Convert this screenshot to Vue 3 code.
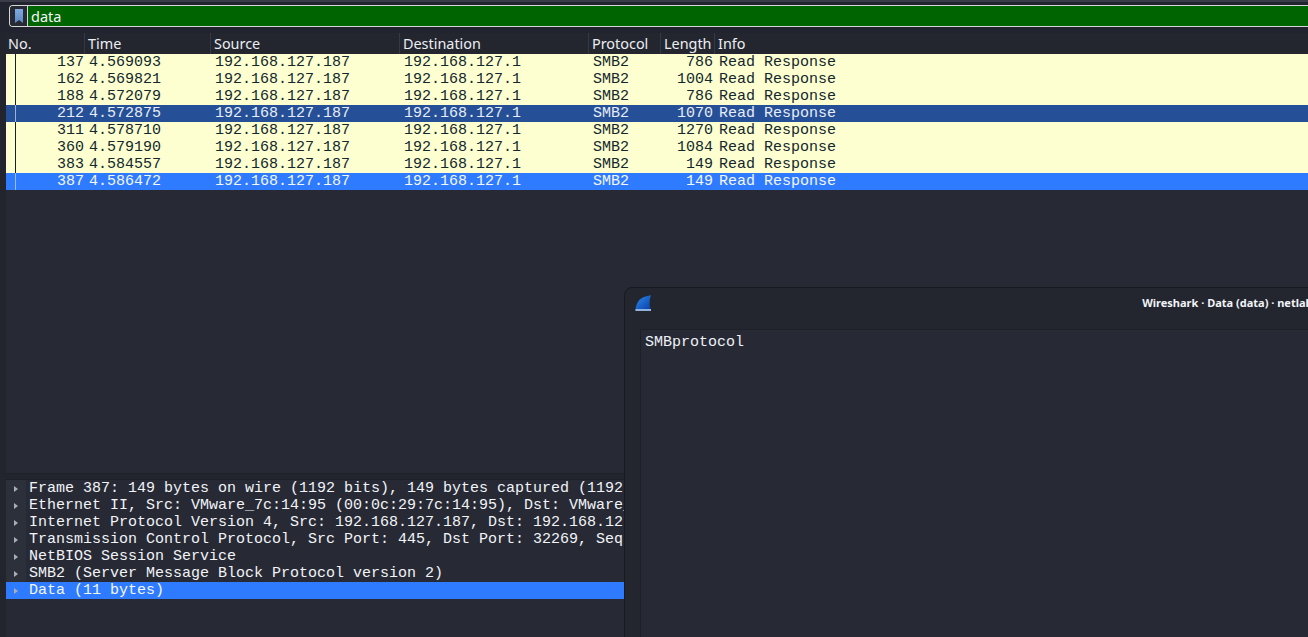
<script setup>
const columns = ['No.', 'Time', 'Source', 'Destination', 'Protocol', 'Length', 'Info']
const rows = [
  ['137', '4.569093', '786', ''],
  ['162', '4.569821', '1004', ''],
  ['188', '4.572079', '786', ''],
  ['212', '4.572875', '1070', 'dim'],
  ['311', '4.578710', '1270', ''],
  ['360', '4.579190', '1084', ''],
  ['383', '4.584557', '149', ''],
  ['387', '4.586472', '149', 'sel'],
]
const tree = [
  'Frame 387: 149 bytes on wire (1192 bits), 149 bytes captured (1192 bits) on interface eth0, id 0',
  'Ethernet II, Src: VMware_7c:14:95 (00:0c:29:7c:14:95), Dst: VMware_c0:00:08 (00:50:56:c0:00:08)',
  'Internet Protocol Version 4, Src: 192.168.127.187, Dst: 192.168.127.1',
  'Transmission Control Protocol, Src Port: 445, Dst Port: 32269, Seq: 8193, Ack: 1, Len: 95',
  'NetBIOS Session Service',
  'SMB2 (Server Message Block Protocol version 2)',
  'Data (11 bytes)',
]
</script>

<template>
  <div class="app">
    <div class="filter-wrap">
      <div class="filter">
        <div class="bookmark">
          <svg width="8" height="14" viewBox="0 0 8 14">
            <defs>
              <linearGradient id="markGrad" x1="0" y1="0" x2="0" y2="1">
                <stop offset="0" stop-color="#7fa9e0" />
                <stop offset="1" stop-color="#5c88c4" />
              </linearGradient>
            </defs>
            <path d="M0 0H8V14L4 11L0 14Z" fill="url(#markGrad)" />
          </svg>
        </div>
        <span class="filter-text">data</span>
      </div>
    </div>

    <div class="packets">
      <div class="row head">
        <div v-for="c in columns" :key="c" class="hcell">{{ c }}</div>
      </div>
      <div v-for="(r, i) in rows" :key="r[0]" class="row pkt" :class="r[3]">
        <span class="mark" :class="{ last: i === rows.length - 1 }"></span>
        <span class="num">{{ r[0] }}</span>
        <span class="cell">{{ r[1] }}</span>
        <span class="cell">192.168.127.187</span>
        <span class="cell">192.168.127.1</span>
        <span class="cell">SMB2</span>
        <span class="len">{{ r[2] }}</span>
        <span class="cell">Read Response</span>
      </div>
    </div>

    <div class="details">
      <div v-for="(t, i) in tree" :key="t" class="node" :class="{ active: i === tree.length - 1 }">
        <span class="gutter"><i class="arrow"></i></span>
        <span class="node-text">{{ t }}</span>
      </div>
    </div>

    <div class="dialog">
      <div class="titlebar">
        <svg class="fin" width="17" height="17" viewBox="0 0 17 17">
          <defs>
            <linearGradient id="finGrad" x1="0" y1="0" x2="1" y2="1">
              <stop offset="0" stop-color="#2a8cf0" />
              <stop offset="1" stop-color="#0b3fa6" />
            </linearGradient>
          </defs>
          <path d="M.5 14C1.5 8 4.5 3.5 9 2C11.5 1.2 14 .5 16 .3C14.3 4.5 14.2 9.5 15.5 14Z" fill="url(#finGrad)" />
          <path d="M.4 14H16V16H.4Z" fill="#8fb2de" />
        </svg>
        <span class="title">Wireshark · Data (data) · netlab.pcapng</span>
      </div>
      <div class="textbox">SMBprotocol</div>
    </div>
  </div>
</template>

<style>
html, body { margin: 0; background: #22252e; overflow: hidden; }
</style>

<style scoped>
.app {
  position: relative;
  width: 1308px;
  height: 637px;
  overflow: hidden;
  background: #22252e;
  display: flex;
  flex-direction: column;
  font-family: "Liberation Mono", monospace;
  color: #f2f4f8;
}
.filter-wrap {
  height: 33px;
  box-sizing: border-box;
  padding: 3px 0 0 9px;
  border-top: 2px solid #3a3d48;
  background: #21242e;
}
.filter {
  height: 22px;
  box-sizing: border-box;
  display: flex;
  align-items: center;
  background: #006400;
  border: 1px solid #d4d6da;
  border-right: 0;
  border-radius: 4px 0 0 4px;
}
.bookmark {
  width: 17px;
  height: 20px;
  flex: none;
  display: flex;
  align-items: center;
  justify-content: center;
  background: #272a35;
  border-right: 1px solid #d4d6da;
  border-radius: 3px 0 0 3px;
}
.filter-text {
  margin-left: 3px;
  font: 14.5px "Noto Sans", sans-serif;
  color: #f5f7fa;
}
.packets {
  margin-left: 6px;
  height: 441px;
  flex: none;
  background: #272a35;
  border-bottom: 1px solid #1e2028;
  box-sizing: border-box;
}
.row {
  display: grid;
  grid-template-columns: 79px 126px 189px 189px 72px 54px 1fr;
}
.head {
  height: 21px;
  box-sizing: border-box;
  background: #23262f;
}
.hcell {
  padding-left: 3px;
  font: 14.4px/21px "Noto Sans", sans-serif;
  color: #eceef3;
  border-right: 1px solid #353945;
  overflow: hidden;
  white-space: nowrap;
}
.hcell:first-child { padding-left: 2px; }
.hcell:last-child { border-right: 0; }
.pkt {
  position: relative;
  height: 17px;
  font-size: 15px;
  line-height: 17px;
  background: #feffd0;
  color: #12272e;
  white-space: pre;
}
.pkt.dim { background: #254f96; color: #e8edf6; }
.pkt.sel { background: #2f7bff; color: #f4f7ff; }
.mark {
  position: absolute;
  left: 9px;
  top: 0;
  bottom: 0;
  width: 1px;
  background: #17202a;
}
.mark.last { background: #9cbcec; }
.dim .mark { background: #9fb1d0; }
.num { text-align: right; padding-right: 1px; }
.len { text-align: right; padding-right: 2px; }
.cell { padding-left: 4px; overflow: hidden; }
.details {
  margin: 5px 0 0 6px;
  flex: 1;
  background: #272a35;
  border-top: 1px solid #1e2028;
}
.node {
  display: flex;
  height: 17px;
  font-size: 15px;
  line-height: 17px;
  white-space: pre;
}
.gutter {
  width: 20px;
  flex: none;
  display: flex;
  align-items: center;
  justify-content: center;
  background: #2c303b;
}
.node-text { margin-left: 3px; }
.arrow {
  display: block;
  width: 0;
  height: 0;
  margin-right: 1px;
  border-left: 4px solid #a9adb7;
  border-top: 3.5px solid transparent;
  border-bottom: 3.5px solid transparent;
}
.node.active { background: #2f7bff; color: #f4f7ff; }
.node.active .gutter { background: #2f7bff; }
.dialog {
  position: absolute;
  left: 624px;
  top: 287px;
  width: 1250px;
  height: 400px;
  box-sizing: border-box;
  background: #23262f;
  border: 1px solid #181a21;
  border-radius: 8px 0 0 0;
}
.titlebar {
  position: relative;
  height: 29px;
  display: flex;
  align-items: center;
  justify-content: center;
}
.fin { position: absolute; left: 10px; top: 7px; }
.title {
  font: 700 11px "Noto Sans", sans-serif;
  color: #f2f4f8;
  white-space: nowrap;
}
.textbox {
  margin: 12px 0 0 15px;
  height: 360px;
  padding: 4px 0 0 4px;
  border: 1px solid #1e2028;
  border-right: 0;
  background: #272a35;
  font-size: 15px;
  line-height: 17px;
  color: #eef1f6;
}
</style>
